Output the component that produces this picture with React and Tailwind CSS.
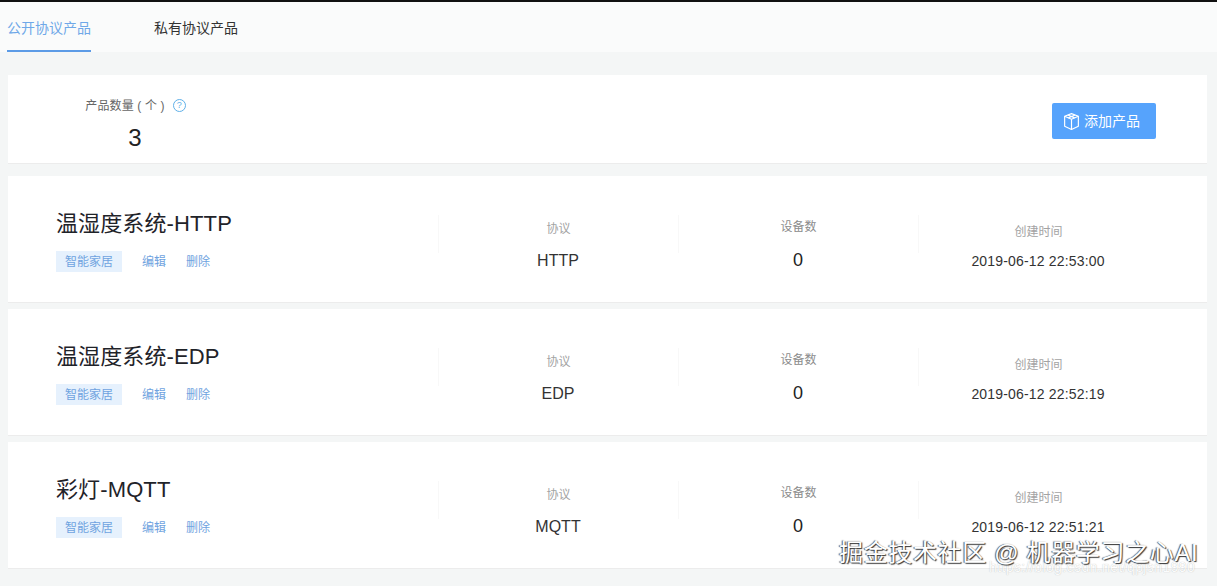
import React from 'react';

const products = [
  { name: '温湿度系统-HTTP', protocol: 'HTTP', created: '2019-06-12 22:53:00' },
  { name: '温湿度系统-EDP', protocol: 'EDP', created: '2019-06-12 22:52:19' },
  { name: '彩灯-MQTT', protocol: 'MQTT', created: '2019-06-12 22:51:21' },
];

const BoxIcon = () => (
  <svg width="19" height="19" viewBox="0 0 18 18" fill="none" stroke="currentColor" strokeWidth="1.1" strokeLinejoin="round">
    <path d="M9 1.5 15.5 4v9.5L9 16.5 2.5 13.5V4L9 1.5Z" />
    <path d="M2.5 4 9 6.8 15.5 4M9 6.8v9.7" />
    <path d="M5.5 2.9 12 5.6M12.5 2.9 6 5.6" />
  </svg>
);

const ProductRow = ({ product }) => (
  <div className="flex h-[127px] border-b border-[#ececec] bg-white">
    <div className="w-[430px] pl-[48px] pt-[32px]">
      <div className="text-[22px] leading-[32px] tracking-[0.12px] text-[#1f2329]">{product.name}</div>
      <div className="mt-[11px] flex items-center text-[12px] text-[#6fa3e0]">
        <span className="flex h-[21px] w-[66px] items-center justify-center bg-[#e6f1fd]">智能家居</span>
        <span className="ml-[20px]">编辑</span>
        <span className="ml-[20px]">删除</span>
      </div>
    </div>
    <div className="mt-[39px] w-[240px] text-center">
      <div className="flex h-[38px] items-start justify-center border-l border-[#f8f8f8] pt-[6px] text-[12px] leading-[17px] text-[#a3a3a3]">协议</div>
      <div className="mt-[-4px] text-[16px] leading-[24px] text-[#333]">{product.protocol}</div>
    </div>
    <div className="mt-[39px] w-[240px] text-center">
      <div className="flex h-[38px] items-start justify-center border-l border-[#f8f8f8] pt-[4px] text-[12px] leading-[17px] text-[#8c8c8c]">设备数</div>
      <div className="mt-[-5px] text-[18px] leading-[24px] text-[#222]">0</div>
    </div>
    <div className="mt-[39px] w-[240px] text-center">
      <div className="flex h-[38px] items-start justify-center border-l border-[#f8f8f8] pt-[9px] text-[12px] leading-[17px] text-[#a3a3a3]">创建时间</div>
      <div className="mt-[-4px] text-[14px] leading-[24px] tracking-[0.17px] text-[#333]">{product.created}</div>
    </div>
  </div>
);

export default function App() {
  return (
    <div className="relative h-[586px] w-[1217px] overflow-hidden bg-[#f4f6f6] font-['Liberation_Sans','Noto_Sans_CJK_SC',sans-serif]">
      <div className="h-[2px] bg-[#111]" />
      <div className="flex h-[50px] bg-[#fafbfb] pl-[7px] text-[14px]">
        <div className="h-[50px] w-[84px] whitespace-nowrap border-b-2 border-[#5c9be6] pt-[16px] leading-[20px] text-[#6fa8e8]">公开协议产品</div>
        <div className="ml-[63px] whitespace-nowrap pt-[16px] leading-[20px] text-[#333]">私有协议产品</div>
      </div>

      <div className="ml-[8px] mr-[10px] mt-[23px] flex h-[89px] items-start border-b border-[#ececec] bg-white">
        <div className="w-[254px] pt-[22px] text-center">
          <div className="flex items-center justify-center pl-[1px] text-[12px] leading-[18px] tracking-[0.15px] text-[#666]">
            <span>产品数量 ( 个 )</span>
            <span className="ml-[8px] mt-[-2px] flex h-[13px] w-[13px] items-center justify-center rounded-full border border-[#5fb0e8] text-[9px] leading-none text-[#5fb0e8]">?</span>
          </div>
          <div className="mt-[8px] text-[24px] leading-[30px] text-[#222]">3</div>
        </div>
        <div className="ml-auto mr-[51px] mt-[28px] flex h-[36px] w-[104px] items-center gap-[3px] rounded-[2px] bg-[#56a3fc] pl-[10px] text-[14px] text-white">
          <BoxIcon />
          <span>添加产品</span>
        </div>
      </div>

      <div className="ml-[8px] mr-[10px] mt-[12px] flex flex-col gap-[6px]">
        {products.map((p) => (
          <ProductRow key={p.name} product={p} />
        ))}
      </div>

      {/* watermarks sit over the page */}
      <div className="absolute left-[989px] top-[558px] whitespace-nowrap text-[14px] leading-[18px] tracking-[0.4px] text-white opacity-70 [text-shadow:0_0_1px_#999]">https://blog.csdn.net/qpjsn1990</div>
      <div className="absolute left-[839px] top-[538px] whitespace-nowrap text-[24px] leading-[30px] tracking-[0.65px] text-white [text-shadow:1px_1px_1px_#333,-1px_0_1px_#555]">掘金技术社区 @ 机器学习之心AI</div>
    </div>
  );
}
